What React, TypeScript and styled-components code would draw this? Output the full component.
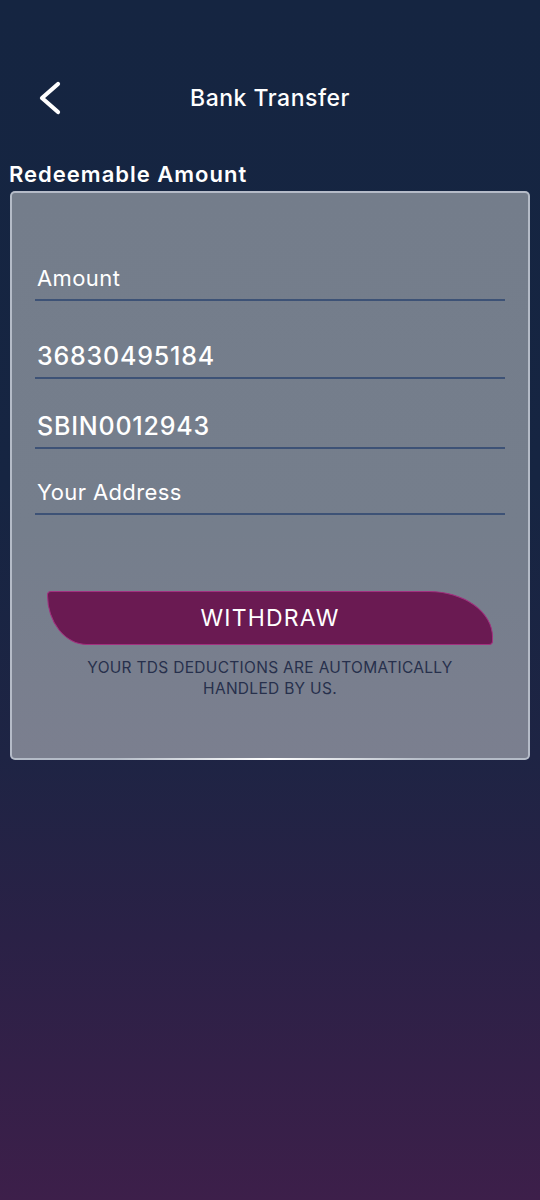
import React from "react";
import styled, { createGlobalStyle } from "styled-components";

const Global = createGlobalStyle`
  html, body { margin: 0; padding: 0; }
  body { font-family: Inter, "Open Sans", sans-serif; background: #152541; }
  * { box-sizing: border-box; }
`;

const Page = styled.div`
  min-height: 1200px;
  width: 540px;
  background: linear-gradient(180deg, #152541 0%, #162542 40%, #1e2444 63%, #2a2146 78%, #3d1f4a 100%);
  padding-top: 68px;
  display: flex;
  flex-direction: column;
`;

const Header = styled.header`
  display: grid;
  grid-template-columns: 1fr auto 1fr;
  align-items: center;
  height: 60px;
  padding-left: 36px;
`;

const BackButton = styled.button`
  background: none;
  border: none;
  padding: 0;
  width: 32px;
  height: 40px;
  display: flex;
  align-items: center;
  cursor: pointer;
  justify-self: start;
`;

const Title = styled.h1`
  margin: 0;
  color: #ffffff;
  font-size: 23px;
  font-weight: 500;
  letter-spacing: 0.5px;
  transform: translateX(-18px);
`;

const SectionLabel = styled.h2`
  margin: 32px 0 0 9px;
  color: #ffffff;
  font-size: 22px;
  font-weight: 600;
  line-height: 28px;
  letter-spacing: 1px;
`;

const Card = styled.div`
  position: relative;
  margin: 3px 10px 0;
  height: 569px;
  border: 2px solid rgba(196, 202, 214, 0.8);
  border-radius: 5px;
  background: linear-gradient(180deg, #747d8b 0%, #757e8c 60%, #7b7f8f 100%);
  padding: 71px 23px 0;
  display: flex;
  flex-direction: column;
  &::after {
    content: "";
    position: absolute;
    left: 20%;
    right: 20%;
    bottom: -2px;
    height: 2px;
    background: linear-gradient(90deg, rgba(255,255,255,0), #ffffff 50%, rgba(255,255,255,0));
  }
`;

const Field = styled.div<{ $gap: number; $strong?: boolean }>`
  margin-top: ${(p) => p.$gap}px;
  padding-bottom: 7px;
  border-bottom: 2px solid #3d5276;
  color: #ffffff;
  font-size: ${(p) => (p.$strong ? 25 : 22)}px;
  font-weight: ${(p) => (p.$strong ? 500 : 400)};
  line-height: 28px;
  padding-left: 2px;
  letter-spacing: ${(p) => (p.$strong ? 0.8 : 0.4)}px;
`;

const WithdrawButton = styled.button`
  margin: 76px 12px 0;
  height: 54px;
  border: 1.5px solid #a2307f;
  border-radius: 4px 64px 4px 40px / 4px 46px 4px 50px;
  background: #6a1a52;
  color: #ffffff;
  font-family: Inter, "Open Sans", sans-serif;
  font-size: 23px;
  font-weight: 400;
  letter-spacing: 1.2px;
  cursor: pointer;
`;

const Note = styled.p`
  margin: 12px 0 0;
  text-align: center;
  color: #27304c;
  font-size: 15.5px;
  line-height: 21px;
  letter-spacing: 0.3px;
  text-transform: uppercase;
`;

export default function App() {
  return (
    <Page>
      <Global />
      <Header>
        <BackButton aria-label="Back">
          <svg width="28" height="36" viewBox="0 0 28 36" fill="none">
            <path d="M22 4 L6 18 L22 32" stroke="#ffffff" strokeWidth="4.2" strokeLinecap="round" strokeLinejoin="round" />
          </svg>
        </BackButton>
        <Title>Bank Transfer</Title>
        <span />
      </Header>
      <SectionLabel>Redeemable Amount</SectionLabel>
      <Card>
        <Field $gap={0}>Amount</Field>
        <Field $gap={41} $strong>36830495184</Field>
        <Field $gap={33} $strong>SBIN0012943</Field>
        <Field $gap={29}>Your Address</Field>
        <WithdrawButton>WITHDRAW</WithdrawButton>
        <Note>
          Your TDS deductions are automatically
          <br />
          handled by us.
        </Note>
      </Card>
    </Page>
  );
}
